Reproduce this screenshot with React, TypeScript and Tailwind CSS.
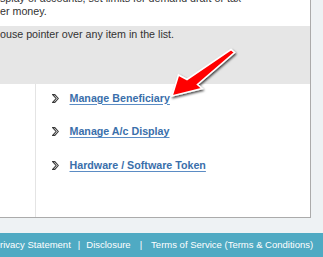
import React from "react";

const links = ["Manage Beneficiary", "Manage A/c Display", "Hardware / Software Token"];

function Chevron() {
  return (
    <svg width="7" height="9" viewBox="0 0 7 9" className="shrink-0">
      <path
        d="M0.6 0.6 L2.8 0.6 L6.3 4.5 L2.8 8.4 L0.6 8.4 L4.1 4.5 Z"
        fill="#ffffff"
        stroke="#3a3a3a"
        strokeWidth="1.1"
        strokeLinejoin="miter"
      />
    </svg>
  );
}

function Arrow() {
  return (
    <svg
      width="323"
      height="257"
      viewBox="0 0 323 257"
      className="pointer-events-none absolute left-0 top-0"
    >
      <defs>
        <filter id="arrowShadow" x="-20%" y="-20%" width="140%" height="140%">
          <feDropShadow dx="1" dy="1.5" stdDeviation="1.2" floodColor="#000000" floodOpacity="0.75" />
        </filter>
      </defs>
      <polygon
        points="172,96 178.5,75 187,79.5 231,49.5 234.5,52.5 197.5,84.5 202,88.5"
        fill="#ff0000"
        stroke="#ffffff"
        strokeWidth="1.6"
        strokeLinejoin="miter"
        filter="url(#arrowShadow)"
      />
    </svg>
  );
}

export default function App() {
  return (
    <div
      className="relative h-[257px] w-[323px] overflow-hidden bg-[#eef2f4] text-[#333333]"
      style={{ fontFamily: '"Liberation Sans", Arial, sans-serif' }}
    >
      <div className="w-[311px] border-b border-r border-[#ababab] bg-white">
        <div className="h-[26px]">
          <p className="relative -top-[8px] text-[10.7px] leading-[13px]">
            splay of accounts, set limits for demand draft or tax
            <br />
            er money.
          </p>
        </div>

        <div className="h-[58px] bg-[#e6e6e6] pt-[2px]">
          <p className="text-[10.7px] leading-[13px]">
            ouse pointer over any item in the list.
          </p>
        </div>

        <div className="flex h-[133px]">
          <div className="w-[36px] border-r border-[#e4e4e4]" />
          <ul className="flex flex-col gap-[20.5px] pl-[16px] pt-[7.5px]">
            {links.map((label) => (
              <li key={label} className="flex h-[13px] items-center gap-[10.5px]">
                <Chevron />
                <a
                  href="#"
                  className="text-[10.7px] font-bold leading-[13px] text-[#3a6fab] underline decoration-[#5b8cc4] underline-offset-[1.5px]"
                >
                  {label}
                </a>
              </li>
            ))}
          </ul>
        </div>
      </div>

      <div className="mt-[15px] flex h-[24px] items-center bg-[#4faac3] text-[9.5px] leading-[22px] text-white">
        <span className="-ml-[6.3px]">Privacy Statement</span>
        <span className="ml-[7px]">|</span>
        <span className="ml-[6px]">Disclosure</span>
        <span className="ml-[9px]">|</span>
        <span className="ml-[9px]">Terms of Service (Terms &amp; Conditions)</span>
      </div>

      <Arrow />
    </div>
  );
}
